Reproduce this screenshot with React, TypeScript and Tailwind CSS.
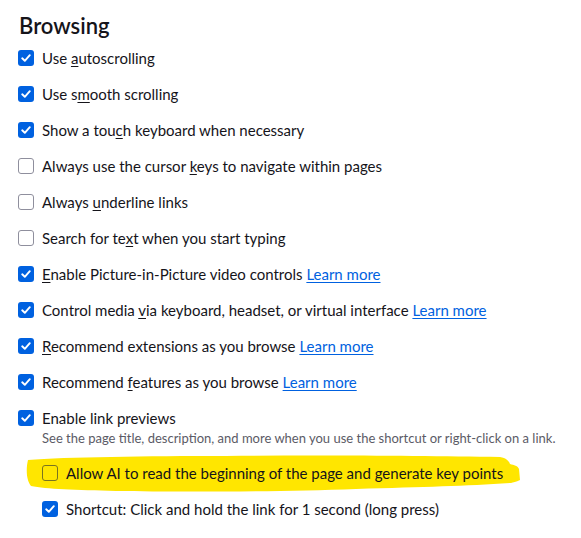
import React from "react";

type Item = {
  label: React.ReactNode;
  checked: boolean;
  learn?: boolean;
};

const u = (s: string) => <u className="underline-offset-2">{s}</u>;

const items: Item[] = [
  { label: <>Use {u("a")}utoscrolling</>, checked: true },
  { label: <>Use s{u("m")}ooth scrolling</>, checked: true },
  { label: <>Show a tou{u("c")}h keyboard when necessary</>, checked: true },
  { label: <>Always use the cursor {u("k")}eys to navigate within pages</>, checked: false },
  { label: <>Always {u("u")}nderline links</>, checked: false },
  { label: <>Search for te{u("x")}t when you start typing</>, checked: false },
  { label: <>{u("E")}nable Picture-in-Picture video controls</>, checked: true, learn: true },
  { label: <>Control media {u("v")}ia keyboard, headset, or virtual interface</>, checked: true, learn: true },
  { label: <>{u("R")}ecommend extensions as you browse</>, checked: true, learn: true },
  { label: <>Recommend {u("f")}eatures as you browse</>, checked: true, learn: true },
];

const Box = ({ checked, marked }: { checked: boolean; marked?: boolean }) =>
  checked ? (
    <span className="flex h-4 w-4 shrink-0 items-center justify-center rounded-[3px] bg-[#0061e0]">
      <svg width="12" height="12" viewBox="0 0 12 12" fill="none">
        <path d="M2.2 6.3 L4.8 8.8 L9.8 3.2" stroke="white" strokeWidth="1.9" strokeLinecap="round" strokeLinejoin="round" />
      </svg>
    </span>
  ) : marked ? (
    <span className="h-4 w-4 shrink-0 rounded-[3px] border border-[#7a7420]" />
  ) : (
    <span className="h-4 w-4 shrink-0 rounded-[3px] border border-[#8f8f9d]" />
  );

const Row = ({ item }: { item: Item }) => (
  <div className="flex h-9 items-center gap-2">
    <Box checked={item.checked} />
    <span>
      {item.label}
      {item.learn && (
        <>
          {" "}
          <a className="text-[#0061e0] underline underline-offset-2">Learn more</a>
        </>
      )}
    </span>
  </div>
);

export default function App() {
  return (
    <div
      className="h-[538px] w-[581px] bg-white pl-[18px] text-[15px] text-[#15141a]"
      style={{ fontFamily: "Lato, \"Open Sans\", sans-serif" }}
    >
      <h1 className="flex h-10 items-center pl-px pt-[10px] text-[22px] font-semibold">Browsing</h1>
      {items.map((it, i) => (
        <Row key={i} item={it} />
      ))}
      <div className="flex h-9 items-center gap-2">
        <Box checked />
        <span>Enable link previews</span>
      </div>
      <div className="-mt-[7px] whitespace-nowrap pl-6 text-[13px] leading-[18px] text-[#5b5b66]">
        See the page title, description, and more when you use the shortcut or right-click on a link.
      </div>
      <div className="relative mt-[8px] pl-6">
        {/* marker highlight */}
        <svg className="absolute left-[8px] top-[-1px]" width="496" height="40" viewBox="0 0 496 40">
          <path
            d="M2 6 C40 3 120 2 200 2 C300 1 400 2 474 3 C480 4 483 7 484 10 C488 11 492 12 493 15 L494 26 C490 28 487 28 485 29 C440 32 400 33 330 35 C250 38 150 38 90 37 C50 36 20 35 5 32 C0 26 0 14 2 6 Z"
            fill="#ffe600"
          />
        </svg>
        <div className="relative flex h-9 items-center gap-2">
          <Box checked={false} marked />
          <span>Allow AI to read the beginning of the page and generate key points</span>
        </div>
        <div className="flex h-9 items-center gap-2">
          <Box checked />
          <span>Shortcut: Click and hold the link for 1 second (long press)</span>
        </div>
      </div>
    </div>
  );
}
